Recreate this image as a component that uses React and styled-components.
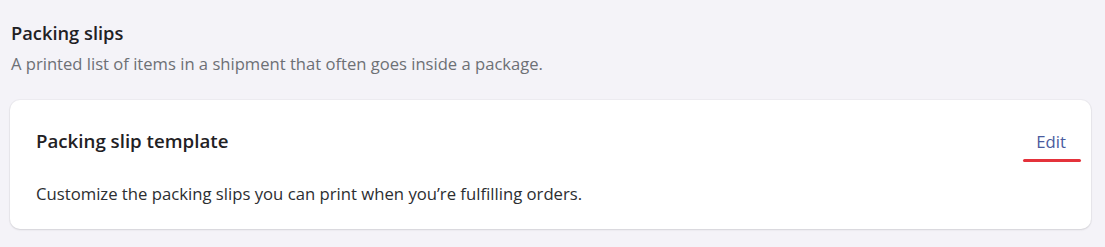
import React from 'react';
import styled, { createGlobalStyle } from 'styled-components';

const GlobalStyle = createGlobalStyle`
  html, body {
    margin: 0;
    padding: 0;
    background: #f4f3f8;
  }
  body {
    font-family: 'Open Sans', 'Noto Sans', sans-serif;
    color: #202223;
  }
`;

const Page = styled.div`
  padding: 21px 14px 18px 10px;
  width: 1105px;
  box-sizing: border-box;
`;

const SectionHeader = styled.div`
  padding-left: 1px;
  margin-bottom: 24px;
`;

const Title = styled.h2`
  margin: 0;
  font-size: 18.3px;
  font-weight: 600;
  line-height: 24px;
  color: #1f2124;
`;

const Subtitle = styled.p`
  margin: 7px 0 0;
  font-size: 16.6px;
  line-height: 24px;
  color: #6d7075;
`;

const Card = styled.div`
  background: #ffffff;
  border-radius: 10px;
  box-shadow: 0 1px 2px rgba(31, 33, 36, 0.12), 0 0 0 1px rgba(31, 33, 36, 0.03);
  padding: 29px 25px 23px 26px;
`;

const CardHeader = styled.div`
  display: flex;
  align-items: center;
  justify-content: space-between;
`;

const CardTitle = styled.h3`
  margin: 0;
  font-size: 18.7px;
  font-weight: 600;
  line-height: 24px;
  color: #1f2124;
`;

const EditLink = styled.a`
  position: relative;
  top: 1px;
  font-size: 16.7px;
  line-height: 24px;
  color: #4a5b9e;
  text-decoration: none;
  cursor: pointer;

  &::after {
    content: '';
    position: absolute;
    left: -13px;
    right: -15px;
    top: 29px;
    height: 3px;
    border-radius: 2px;
    background: #e4323b;
  }
`;

const Description = styled.p`
  margin: 29px 0 0;
  font-size: 16.7px;
  line-height: 24px;
  color: #2c2e31;
`;

export default function App() {
  return (
    <>
      <GlobalStyle />
      <Page>
        <SectionHeader>
          <Title>Packing slips</Title>
          <Subtitle>A printed list of items in a shipment that often goes inside a package.</Subtitle>
        </SectionHeader>
        <Card>
          <CardHeader>
            <CardTitle>Packing slip template</CardTitle>
            <EditLink>Edit</EditLink>
          </CardHeader>
          <Description>Customize the packing slips you can print when you’re fulfilling orders.</Description>
        </Card>
      </Page>
    </>
  );
}
